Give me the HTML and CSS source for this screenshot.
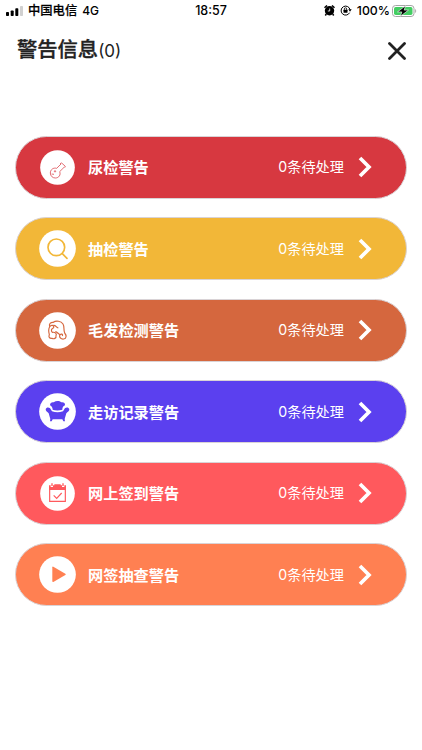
FILE: index.html
```
<!DOCTYPE html>
<html lang="zh-CN">
<head>
  <meta charset="UTF-8">
  <meta name="viewport" content="width=device-width, initial-scale=1.0">
  <title>警告信息</title>
  <link rel="stylesheet" href="styles.css">
</head>
<body>
  <div class="status-bar">
    <div class="carrier">
      <svg class="signal" width="17" height="10" viewBox="0 0 17 10">
        <rect x="0" y="6" width="3" height="4" rx="0.8"/>
        <rect x="4.7" y="4.5" width="3" height="5.5" rx="0.8"/>
        <rect x="9.3" y="2.2" width="3" height="7.8" rx="0.8"/>
        <rect class="off" x="14" y="0" width="3" height="10" rx="0.8"/>
      </svg>
      <span class="operator">中国电信</span>
      <span class="network">4G</span>
    </div>
    <div class="time">18:57</div>
    <div class="indicators">
      <svg class="alarm" width="11" height="11" viewBox="0 0 11 11">
        <circle cx="5.5" cy="5.7" r="4.7"/>
        <path d="M.5 2.8 3 .5M10.5 2.8 8 .5M2.3 9l-1 1.5M8.7 9l1 1.5" stroke="#000" stroke-width="1.5"/>
        <path d="M5.7 3.5V6H3.8" fill="none" stroke="#fff" stroke-width="0.8"/>
      </svg>
      <svg class="lock" width="12" height="11" viewBox="0 0 12 11">
        <path d="M9.6 7.7A4.5 4.5 0 1 1 10 4.600" fill="none" stroke="#000"/>
        <path d="M8.3 4.3h3.400L10 6.8z"/>
        <rect x="3.5" y="4.8" width="4" height="3" rx="0.5"/>
        <path d="M4.3 5V4a1.200 1.200 0 0 1 2.400 0v1" fill="none" stroke="#000" stroke-width="0.8"/>
      </svg>
      <span>100%</span>
      <svg class="battery" width="25" height="12" viewBox="0 0 25 12">
        <rect x="0.5" y="0.5" width="21.5" height="11" rx="3" fill="#fff" stroke="#a5a5a5"/>
        <rect x="2" y="2" width="18.5" height="8" rx="1.7" fill="#43cd62"/>
        <path d="M23.2 4v4c1.3-.6 1.3-3.4 0-4z" fill="#a5a5a5"/>
        <path d="M13.5.8l-8 6.100h4.300L8.500 11.200l8-6.100h-4.300z" stroke="#fff" stroke-width="0.6"/>
      </svg>
    </div>
  </div>

  <div class="header">
    <h1>警告信息<span>(0)</span></h1>
    <svg class="close" width="18" height="18" viewBox="0 0 18 18">
      <path d="M1.5 1.5l15 15M16.5 1.5l-15 15"/>
    </svg>
  </div>

  <div class="list">
    <div class="card red">
      <svg class="icon" viewBox="0 0 111 111">
        <circle class="disc" cx="55.5" cy="55.5" r="52"/>
        <g class="line thin">
          <path d="M66 45 53 58c-10-3-19 4-19 14 0 9 7 15 15 15 11 0 17-10 13-19l14-14"/>
          <path d="M63 44l5-2 11 10-2 4"/>
          <path d="M38 75l7 1"/>
          <circle cx="48" cy="67" r="2"/>
        </g>
      </svg>
      <span class="name">尿检警告</span>
      <span class="count">0条待处理</span>
      <svg class="arrow" viewBox="0 0 14 22"><path d="M2 2 11 11 2 20"/></svg>
    </div>

    <div class="card yellow">
      <svg class="icon" viewBox="0 0 111 111">
        <circle class="disc" cx="55.5" cy="55.5" r="55"/>
        <g class="line bold">
          <circle cx="52" cy="52" r="25"/>
          <path d="M70 71l14 14"/>
        </g>
      </svg>
      <span class="name">抽检警告</span>
      <span class="count">0条待处理</span>
      <svg class="arrow" viewBox="0 0 14 22"><path d="M2 2 11 11 2 20"/></svg>
    </div>

    <div class="card brown">
      <svg class="icon" viewBox="0 0 111 111">
        <circle class="disc" cx="55.5" cy="55.5" r="55"/>
        <g class="line">
          <path d="M32 44c-3-8 3-14 11-13 8-6 23-4 29 5 5 8 1 18 5 27 6 7 6 17-3 18-8 1-14-5-12-11 3-6 11-4 8 2"/>
          <path d="M32 44c5-7 14-4 12 3-7 3-9 9-4 14 9-1 14 4 11 10 2 8-7 11-12 8-8 1-11-5-8-11-2-7-3-17 1-24z"/>
          <path d="M43 40c8-1 8 6 15 8M49 59c7 1 9 8 15 9"/>
        </g>
      </svg>
      <span class="name">毛发检测警告</span>
      <span class="count">0条待处理</span>
      <svg class="arrow" viewBox="0 0 14 22"><path d="M2 2 11 11 2 20"/></svg>
    </div>

    <div class="card purple">
      <svg class="icon" viewBox="0 0 111 111">
        <circle class="disc" cx="55.5" cy="55.5" r="55"/>
        <g class="solid">
          <path d="M33 37c0-7 5-10 11-9 7-5 17-5 23 0 7-1 12 2 11 9-6 3-8 7-8 13-10 3-20 3-29 0 0-6-3-10-8-13z"/>
          <path d="M20 49c2-7 13-7 16 1l3 5c11 4 22 4 33 0l3-5c3-8 14-8 16-1 0 6-5 8-9 12l-5 17 1 7h-5l-3-6H41l-3 6h-5l1-7-5-17c-4-4-9-6-9-12z"/>
        </g>
      </svg>
      <span class="name">走访记录警告</span>
      <span class="count">0条待处理</span>
      <svg class="arrow" viewBox="0 0 14 22"><path d="M2 2 11 11 2 20"/></svg>
    </div>

    <div class="card pink">
      <svg class="icon" viewBox="0 0 111 111">
        <circle class="disc" cx="55.5" cy="55.5" r="52"/>
        <path class="solid" d="M30 31h5v5h7v-5h27v5h7v-5h5v14H30zM37 25h4v8h-4zM46 28h19v4H46zM70 25h4v8h-4z"/>
        <g class="line">
          <path d="M32 42v37h47V42"/>
          <path d="M44 61l9 9 15-16"/>
        </g>
      </svg>
      <span class="name">网上签到警告</span>
      <span class="count">0条待处理</span>
      <svg class="arrow" viewBox="0 0 14 22"><path d="M2 2 11 11 2 20"/></svg>
    </div>

    <div class="card orange">
      <svg class="icon" viewBox="0 0 111 111">
        <circle class="disc" cx="55.5" cy="55.5" r="55"/>
        <path class="solid" d="M40 34q0-3 3-2l36 21q3 2 0 4L43 78q-3 1-3-2z"/>
      </svg>
      <span class="name">网签抽查警告</span>
      <span class="count">0条待处理</span>
      <svg class="arrow" viewBox="0 0 14 22"><path d="M2 2 11 11 2 20"/></svg>
    </div>
  </div>
</body>
</html>
```

FILE: styles.css
```
* {
  box-sizing: border-box;
}
body {
  margin: 0;
  background-color: #fff;
  color: #222;
  font-family: Inter, "Noto Sans CJK SC", sans-serif;
}
svg {
  display: block;
  flex-shrink: 0;
}
.status-bar {
  display: grid;
  grid-template-columns: 1fr auto 1fr;
  align-items: center;
  height: 21px;
  padding: 0 5px 0 6px;
  font-size: 12.3px;
  font-weight: 500;
  line-height: 20px;
  color: #000;
}
.carrier,
.indicators {
  display: flex;
  align-items: center;
}
.operator {
  -webkit-text-stroke: 0.2px #000;
}
.time {
  margin-right: 1px;
  font-size: 12.5px;
}
.signal {
  margin-right: 5px;
}
.signal .off {
  fill: #d0d0d0;
}
.network {
  margin-left: 5px;
  font-size: 12px;
}
.indicators {
  justify-content: flex-end;
}
.alarm {
  margin-right: 1px;
}
.lock {
  margin: 0 5px 0 4px;
}
.battery {
  margin-left: 2px;
}
.header {
  display: flex;
  justify-content: space-between;
  align-items: center;
  height: 59px;
  padding: 0 16px 0 17px;
}
h1 {
  margin: 0;
  font-size: 20.3px;
  font-weight: 500;
  line-height: 30px;
  -webkit-text-stroke: 0.35px #222;
}
h1 span {
  font-size: 17px;
  font-weight: 400;
  -webkit-text-stroke: 0;
}
.close path {
  fill: none;
  stroke: #222;
  stroke-width: 2.8;
  stroke-linecap: round;
}
.list {
  display: flex;
  flex-direction: column;
  gap: 18.5px;
  padding: 55.5px 15px 0;
}
.card {
  display: flex;
  align-items: center;
  height: 63px;
  padding: 0 34px 0 22.5px;
  background-color: var(--color);
  border: 1px solid #d9d3d6;
  border-radius: 32px;
  color: #fff;
}
.icon {
  width: 37px;
  height: 37px;
}
.name,
.count {
  padding-bottom: 2px;
}
.name {
  margin-left: 12.5px;
  font-size: 15.2px;
  font-weight: 700;
}
.count {
  margin-left: auto;
  font-size: 14.2px;
}
.arrow {
  width: 14px;
  height: 22px;
  margin-left: 14px;
}
.arrow path {
  fill: none;
  stroke: #fff;
  stroke-width: 3.7;
}
.disc {
  fill: #fff;
}
.solid {
  fill: var(--color);
}
.line {
  fill: none;
  stroke: var(--color);
  stroke-width: 3.5;
}
.thin {
  stroke-width: 2.2;
}
.bold {
  stroke-width: 5;
  stroke-linecap: round;
}
.red {
  --color: #d73840;
}
.yellow {
  --color: #f2b738;
}
.brown {
  --color: #d5673e;
}
.purple {
  --color: #5b40ef;
}
.pink {
  --color: #ff595d;
}
.orange {
  --color: #ff8052;
}
```
